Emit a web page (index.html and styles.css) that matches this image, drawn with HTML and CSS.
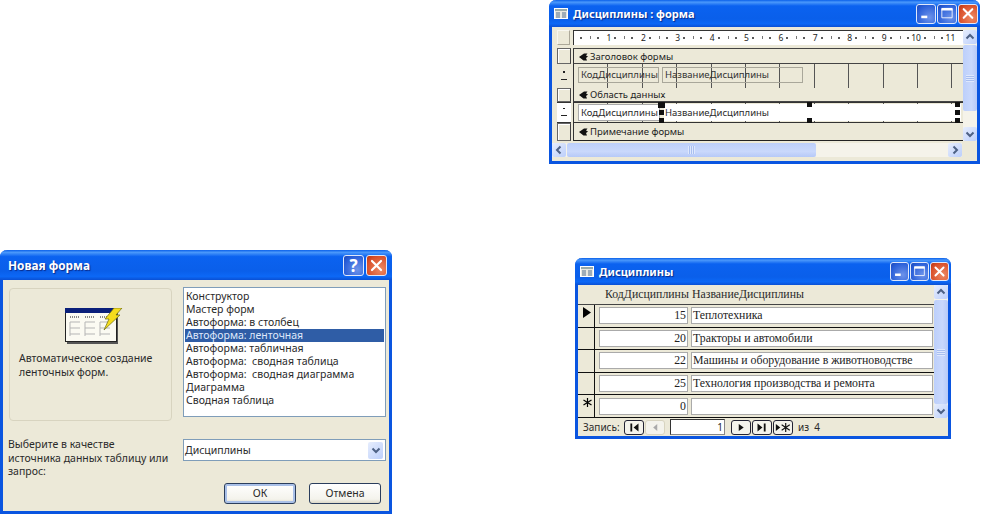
FILE: index.html
```html
<!DOCTYPE html>
<html lang="ru">
<head>
<meta charset="utf-8">
<title>Формы</title>
<link rel="stylesheet" href="styles.css">
</head>
<body>
<svg class="defs" width="0" height="0" aria-hidden="true">
  <symbol id="appicon" viewBox="0 0 14 11">
    <rect x="0.5" y="0.5" width="13" height="10" fill="#e8e8e0" stroke="#fff"/>
    <rect x="1" y="1" width="12" height="2" fill="#9aa"/>
    <path d="M2 5h4M8 5h4M2 7h4M8 7h4M2 9h4M8 9h4" stroke="#55708f" stroke-width="1"/>
  </symbol>
  <symbol id="min" viewBox="0 0 21 21"><rect x="5" y="13" width="7" height="3" fill="#fff"/></symbol>
  <symbol id="max" viewBox="0 0 21 21"><path d="M4.500 5.500h12v10h-12z" fill="none" stroke="#fff"/><rect x="4" y="4" width="13" height="3" fill="#fff"/></symbol>
  <symbol id="close" viewBox="0 0 21 21"><path d="M5.500 5.500l10 10M15.500 5.500l-10 10" stroke="#fff" stroke-width="2.400" stroke-linecap="round"/></symbol>
  <symbol id="up" viewBox="0 0 14 14"><path d="M3.500 8.500L7 5l3.500 3.500" fill="none" stroke="#4d6185" stroke-width="2"/></symbol>
  <symbol id="down" viewBox="0 0 14 14"><path d="M3.500 5.500L7 9l3.500-3.500" fill="none" stroke="#4d6185" stroke-width="2"/></symbol>
  <symbol id="left" viewBox="0 0 14 14"><path d="M8.500 3.500L5 7l3.500 3.500" fill="none" stroke="#4d6185" stroke-width="2"/></symbol>
  <symbol id="right" viewBox="0 0 14 14"><path d="M5.500 3.500L9 7l-3.500 3.500" fill="none" stroke="#4d6185" stroke-width="2"/></symbol>
  <symbol id="hand" viewBox="0 0 9 8"><path d="M0 4L5 0.500h3.500L7 2.500 9 3.500 7 5l1 2.500H4.500z" fill="#111"/></symbol>
</svg>

<section class="window win-design">
  <header class="title">
    <svg class="appicon"><use href="#appicon"/></svg>
    <span class="title-text">Дисциплины : форма</span>
    <span class="tbtn blue"><svg><use href="#min"/></svg></span>
    <span class="tbtn blue"><svg><use href="#max"/></svg></span>
    <span class="tbtn red"><svg><use href="#close"/></svg></span>
  </header>
  <div class="design-body">
    <div class="design-top">
      <div class="design-main">
        <div class="ruler-row">
          <div class="rail-corner"></div>
          <div class="ruler">
            <span class="cm">1</span><span class="cm">2</span><span class="cm">3</span><span class="cm">4</span><span class="cm">5</span><span class="cm">6</span><span class="cm">7</span><span class="cm">8</span><span class="cm">9</span><span class="cm">10</span><span class="cm">11</span>
          </div>
        </div>
        <div class="d-row bar-first">
          <div class="rail"><i class="rail-box"></i></div>
          <div class="d-bar"><svg class="hand"><use href="#hand"/></svg>Заголовок формы</div>
        </div>
        <div class="d-row zone">
          <div class="rail"><i class="rail-mark beige"></i></div>
          <div class="d-grid">
            <span class="lbl lbl-a">КодДисциплины</span>
            <span class="lbl lbl-b">НазваниеДисциплины</span>
          </div>
        </div>
        <div class="d-row bar-mid">
          <div class="rail"><i class="rail-box"></i></div>
          <div class="d-bar"><svg class="hand"><use href="#hand"/></svg>Область данных</div>
        </div>
        <div class="d-row detail">
          <div class="rail"><i class="rail-mark"></i></div>
          <div class="d-grid detail-grid">
            <span class="field field-a">КодДисциплины</span>
            <span class="field field-b">НазваниеДисциплины</span>
            <i class="handle h1"></i><i class="handle h2"></i><i class="handle h3"></i><i class="handle h4"></i><i class="handle h5"></i><i class="handle h6"></i><i class="handle h7"></i><i class="handle h8"></i>
          </div>
        </div>
        <div class="d-row bar-last">
          <div class="rail"><i class="rail-box"></i></div>
          <div class="d-bar"><svg class="hand"><use href="#hand"/></svg>Примечание формы</div>
        </div>
      </div>
      <div class="vscroll">
        <span class="sbtn"><svg><use href="#up"/></svg></span>
        <span class="vthumb"><i class="grip"></i></span>
        <span class="vtrack"></span>
        <span class="sbtn"><svg><use href="#down"/></svg></span>
      </div>
    </div>
    <div class="hscroll">
      <span class="sbtn"><svg><use href="#left"/></svg></span>
      <span class="hthumb"><i class="hgrip"></i></span>
      <span class="htrack"></span>
      <span class="sbtn"><svg><use href="#right"/></svg></span>
      <span class="hcorner"></span>
    </div>
  </div>
</section>

<section class="window win-dialog">
  <header class="title title-dialog">
    <span class="title-text">Новая форма</span>
    <span class="tbtn blue help">?</span>
    <span class="tbtn red"><svg><use href="#close"/></svg></span>
  </header>
  <div class="dialog-body">
    <div class="dialog-top">
      <div class="panel">
        <svg class="wizard" viewBox="0 0 58 38" aria-hidden="true">
          <rect x="2" y="3" width="51" height="33" fill="#555"/>
          <rect x="0.500" y="0.500" width="51" height="33" fill="#fbfaf2" stroke="#222"/>
          <rect x="0" y="0" width="52" height="5" fill="#0a1f7a"/>
          <path d="M5 9h10M20 9h10M35 9h10" stroke="#888" stroke-width="2" stroke-dasharray="1 1"/>
          <path d="M5 14h10M20 14h10M35 14h10M5 20h10M20 20h10M35 20h10M5 26h10M20 26h10M35 26h10M5 14v14M20 14v14M35 14v14" stroke="#b5b5b5"/>
          <path d="M49 0h8l-6 7h4L39 22l5-11h-4z" fill="#f5dc1e" stroke="#6a6a10" stroke-width="0.700"/>
        </svg>
        <p class="panel-text">Автоматическое создание<br>ленточных форм.</p>
      </div>
      <ul class="list">
        <li>Конструктор</li>
        <li>Мастер форм</li>
        <li>Автоформа: в столбец</li>
        <li class="sel">Автоформа: ленточная</li>
        <li>Автоформа: табличная</li>
        <li>Автоформа:&nbsp; сводная таблица</li>
        <li>Автоформа:&nbsp; сводная диаграмма</li>
        <li>Диаграмма</li>
        <li>Сводная таблица</li>
      </ul>
    </div>
    <div class="dialog-source">
      <p class="source-label">Выберите в качестве<br>источника данных таблицу или<br>запрос:</p>
      <div class="combo"><span class="combo-text">Дисциплины</span><span class="sbtn combo-btn"><svg><use href="#down"/></svg></span></div>
    </div>
    <div class="dialog-actions">
      <span class="btn btn-default">ОК</span>
      <span class="btn">Отмена</span>
    </div>
  </div>
</section>

<section class="window win-form">
  <header class="title">
    <svg class="appicon"><use href="#appicon"/></svg>
    <span class="title-text">Дисциплины</span>
    <span class="tbtn blue"><svg><use href="#min"/></svg></span>
    <span class="tbtn blue"><svg><use href="#max"/></svg></span>
    <span class="tbtn red"><svg><use href="#close"/></svg></span>
  </header>
  <div class="form-top">
    <div class="form-main">
      <div class="form-head"><span class="fh-a">КодДисциплины</span><span class="fh-b">НазваниеДисциплины</span></div>
      <div class="rec">
        <div class="sel-col"><svg class="cur" viewBox="0 0 8 11"><path d="M0 0l8 5.500L0 11z" fill="#000"/></svg></div>
        <span class="cell num">15</span><span class="cell txt">Теплотехника</span>
      </div>
      <div class="rec">
        <div class="sel-col"></div>
        <span class="cell num">20</span><span class="cell txt">Тракторы и автомобили</span>
      </div>
      <div class="rec">
        <div class="sel-col"></div>
        <span class="cell num">22</span><span class="cell txt">Машины и оборудование в животноводстве</span>
      </div>
      <div class="rec">
        <div class="sel-col"></div>
        <span class="cell num">25</span><span class="cell txt">Технология производства и ремонта</span>
      </div>
      <div class="rec">
        <div class="sel-col"><svg class="cur star" viewBox="0 0 9 9"><path d="M4.500 0v9M0.500 2l8 5M8.500 2l-8 5" stroke="#000" stroke-width="1.200"/></svg></div>
        <span class="cell num">0</span><span class="cell txt"></span>
      </div>
    </div>
    <div class="vscroll">
      <span class="sbtn"><svg><use href="#up"/></svg></span>
      <span class="vthumb"><i class="grip"></i></span>
      <span class="sbtn"><svg><use href="#down"/></svg></span>
    </div>
  </div>
  <div class="nav">
    <span class="nav-label">Запись:</span>
    <span class="nbtn"><svg viewBox="0 0 20 14"><path d="M6 2.500h2v9H6zM15 2.500v9L9.500 7z" fill="#111"/></svg></span>
    <span class="nbtn off"><svg viewBox="0 0 20 14"><path d="M12.500 3v8L8 7z" fill="#aaa"/></svg></span>
    <span class="nav-input">1</span>
    <span class="nbtn"><svg viewBox="0 0 20 14"><path d="M7.500 3v8L13 7z" fill="#111"/></svg></span>
    <span class="nbtn"><svg viewBox="0 0 20 14"><path d="M5 2.500v9L10.500 7zM12 2.500h2v9h-2z" fill="#111"/></svg></span>
    <span class="nbtn"><svg viewBox="0 0 20 14"><path d="M2 3v8l5-4z" fill="#111"/><path d="M13 2v10M8.500 4l9 6M17.500 4l-9 6" stroke="#111" stroke-width="1.300"/></svg></span>
    <span class="nav-of">из&nbsp; 4</span>
  </div>
</section>
</body>
</html>
```

FILE: styles.css
```css
html, body { margin: 0; padding: 0; height: 100%; background: #fff; overflow: hidden; }
body { position: relative; font-family: "Noto Sans", "Liberation Sans", sans-serif; font-size: 10.500px; color: #2a2a2a; }
.defs { position: absolute; }
p { margin: 0; }
i { font-style: normal; display: block; }

.window { position: absolute; box-sizing: border-box; display: flex; flex-direction: column; background: #ece9d8; border: 3px solid #0a55e0; border-top: 0; border-radius: 7px 7px 0 0; }
.win-design { left: 549px; top: 0; width: 431px; height: 164px; }
.win-dialog { left: 0; top: 250px; width: 392px; height: 264px; }
.win-form { left: 575px; top: 258px; width: 376px; height: 181px; }

.title { flex: none; display: flex; align-items: center; gap: 1px; height: 27px; margin: 0 -3px; padding: 0 2px 0 5px; border-radius: 7px 7px 0 0; background: linear-gradient(#0a60ea 0, #4a98fb 8%, #0b62f0 22%, #0a5fea 70%, #0c68f6 88%, #0a50d4 100%); }
.title-dialog { height: 30px; padding-left: 8px; padding-right: 5px; }
.title-text { flex: 1; color: #fff; font-weight: 700; font-size: 11px; text-shadow: 1px 1px 1px #0a2a88; }
.title-dialog .title-text { font-size: 11.800px; }
.appicon { flex: none; width: 14px; height: 11px; margin-right: 4px; }
.tbtn { flex: none; box-sizing: border-box; display: flex; align-items: center; justify-content: center; width: 20px; height: 20px; border: 1px solid #dfe8fb; border-radius: 3px; color: #fff; }
.tbtn svg { width: 19px; height: 19px; }
.tbtn.blue { background: radial-gradient(circle at 70% 70%, #6d93ea, #2a5fd8 70%, #1c47b8); }
.tbtn.red { background: radial-gradient(circle at 70% 70%, #ee8a64, #d9502a 70%, #b83310); }
.help { font-size: 17px; font-weight: 700; line-height: 1; }
.win-dialog .tbtn { width: 21px; height: 21px; }
.win-dialog .title { gap: 2px; }
.win-form .tbtn { width: 19px; height: 19px; }

/* scrollbars */
.sbtn { flex: none; display: flex; align-items: center; justify-content: center; box-sizing: border-box; width: 14px; height: 14px; background: linear-gradient(135deg, #e6edfd, #bccffb); border-radius: 2px; }
.sbtn svg { width: 14px; height: 14px; }
.vscroll { flex: none; width: 14px; display: flex; flex-direction: column; background: #f5f3ea; }
.vthumb { flex: 1; box-sizing: border-box; display: flex; align-items: center; justify-content: center; margin-top: 1px; background: linear-gradient(90deg, #bccffb, #c9d8fc 60%, #b6c9f8); border-radius: 2px; }
.grip { width: 8px; height: 7px; background: repeating-linear-gradient(#dfe8fd 0 1px, #a9bff0 1px 2px); }
.vtrack { flex: none; height: 16px; }
.hscroll { flex: none; display: flex; height: 14px; margin-top: 2px; background: #f5f3ea; }
.hthumb { flex: none; width: 249px; margin: 0 0 0 1px; display: flex; align-items: center; justify-content: center; background: linear-gradient(#bccffb, #c9d8fc 60%, #b6c9f8); border-radius: 2px; }
.hgrip { width: 7px; height: 8px; background: repeating-linear-gradient(90deg, #dfe8fd 0 1px, #a9bff0 1px 2px); }
.htrack { flex: 1; }
.hcorner { flex: none; width: 15px; background: #ece9d8; }

/* design window */
.design-body { flex: 1; display: flex; flex-direction: column; padding-top: 3px; }
.design-top { display: flex; height: 111px; }
.design-main { flex: 1; min-width: 0; display: flex; flex-direction: column; }
.ruler-row { flex: none; display: flex; height: 15px; padding-left: 5px; gap: 3px; margin-bottom: 3px; }
.rail-corner { flex: none; width: 13px; box-sizing: border-box; border: 1px solid #f8f7f0; border-right-color: #aca899; border-bottom-color: #aca899; }
.ruler { flex: 1; display: flex; padding-left: 3px; background: #fff; border-top: 1px solid #333; border-left: 1px solid #333; overflow: hidden; box-sizing: border-box; }
.cm { flex: none; box-sizing: border-box; width: 34.400px; text-align: right; font-size: 8.500px; line-height: 14px; color: #222; background: radial-gradient(circle, #555 0 0.700px, transparent 0.900px) 2px 5px / 4px 4px no-repeat, linear-gradient(#777, #777) 13px 5px / 1px 3px no-repeat, radial-gradient(circle, #555 0 0.700px, transparent 0.900px) 19px 5px / 4px 4px no-repeat; }
.d-row { flex: none; display: flex; }
.bar-first { height: 16px; }
.zone { height: 24px; }
.bar-mid { height: 14px; }
.detail { height: 21px; }
.bar-last { height: 18px; }
.rail { flex: none; width: 21px; box-sizing: border-box; padding: 0 2px 0 5px; display: flex; }
.rail-box { flex: 1; box-sizing: border-box; border: 1px solid #666; border-right-color: #444; box-shadow: inset 1px 1px 0 #fff; }
.rail-mark { flex: 1; box-sizing: border-box; border-top: 1px solid #333; border-bottom: 1px solid #333; background: linear-gradient(#222, #222) 50% 5px / 2px 1px no-repeat, linear-gradient(#222, #222) 50% 12px / 6px 1px no-repeat, #fff; }
.rail-mark.beige { border: 0; background: linear-gradient(#222, #222) 50% 7px / 2px 2px no-repeat, linear-gradient(#222, #222) 50% 15px / 6px 1px no-repeat, #ece9d8; }
.d-bar { flex: 1; display: flex; align-items: center; gap: 2px; padding-left: 5px; border-left: 1px solid #333; border-top: 1px solid #444; border-bottom: 1px solid #444; font-size: 9.500px; line-height: 1; padding-top: 1px; color: #222; }
.bar-mid .d-bar, .bar-last .d-bar { border-top: 0; }
.bar-last .d-bar { border-bottom: 1px solid #222; }
.hand { flex: none; width: 9px; height: 8px; }
.d-grid { flex: 1; position: relative; border-left: 1px solid #333; background: repeating-linear-gradient(90deg, transparent 0 33.400px, #555 33.400px 34.400px); }
.lbl { position: absolute; top: 3px; height: 16px; box-sizing: border-box; border: 1px solid #a9a79a; font-size: 9.500px; line-height: 14px; padding-left: 2px; white-space: nowrap; color: #333; }
.lbl-a { left: 4px; width: 81px; }
.lbl-b { left: 88px; width: 141px; }
.detail-grid { background: #ece9d8 repeating-linear-gradient(90deg, transparent 0 33.400px, #555 33.400px 34.400px); border-top: 1px solid #333; border-bottom: 1px solid #333; }
.field { position: absolute; top: 1px; height: 17px; box-sizing: border-box; background: #fff; border: 1px solid #aaa; font-size: 9.500px; line-height: 16px; padding-left: 2px; white-space: nowrap; }
.field-a { left: 4px; width: 82px; }
.field-b { left: 90px; width: 297px; padding-left: 1px; border: 0; line-height: 18px; }
.handle { position: absolute; width: 5px; height: 5px; background: #111; }
.h1 { left: 84px; top: -1px; width: 7px; height: 6px; }
.h2 { left: 85px; top: 7px; }
.h3 { left: 85px; top: 15px; }
.h4 { left: 233px; top: -1px; }
.h5 { left: 233px; top: 15px; }
.h6 { left: 381px; top: -1px; }
.h7 { left: 381px; top: 7px; }
.h8 { left: 381px; top: 15px; }

/* dialog */
.dialog-body { flex: 1; display: flex; flex-direction: column; padding: 7px 3px 0 6px; }
.dialog-top { display: flex; gap: 11px; align-items: flex-start; }
.panel { flex: none; box-sizing: border-box; width: 163px; height: 133px; margin-top: 1px; padding: 19px 0 0 9px; border: 1px solid #d8d4c0; border-radius: 4px; }
.wizard { display: block; width: 58px; height: 38px; margin: 0 0 5px 46px; }
.panel-text { line-height: 14px; }
.list { flex: none; box-sizing: border-box; width: 203px; height: 130px; margin: 0; padding: 2px 1px; list-style: none; background: #fff; border: 1px solid #7f9db9; }
.list li { height: 13px; line-height: 13px; padding-left: 1px; white-space: nowrap; }
.list li.sel { background: #2f5da6; color: #dfe8fb; }
.dialog-source { display: flex; justify-content: space-between; margin-top: 18px; height: 42px; margin-left: -1px; }
.source-label { line-height: 13.500px; margin-top: -1px; }
.combo { flex: none; box-sizing: border-box; display: flex; align-items: center; width: 203px; height: 22px; padding: 0 2px 0 1px; background: #fff; border: 1px solid #7f9db9; }
.combo-text { flex: 1; }
.combo-btn { width: 15px; height: 17px; }
.dialog-actions { display: flex; justify-content: flex-end; gap: 13px; padding-right: 5px; margin-top: 2px; }
.btn { box-sizing: border-box; width: 72px; height: 21px; line-height: 18px; text-align: center; background: linear-gradient(#fff, #f4f3ec 80%, #dcd8c8); border: 1px solid #2a3d5c; border-radius: 3px; font-size: 10.500px; }
.btn-default { box-shadow: inset 0 0 0 2px #a9c0e8; }

/* form window */
.form-top { display: flex; height: 133px; }
.form-main { flex: 1; min-width: 0; display: flex; flex-direction: column; }
.form-head { flex: none; height: 20px; display: flex; align-items: center; font-family: "Liberation Serif", serif; font-size: 11.800px; border-bottom: 1px solid #444; box-sizing: border-box; }
.fh-a { margin-left: 27px; width: 87px; white-space: nowrap; }
.fh-b { white-space: nowrap; }
.rec { flex: none; height: 22.600px; box-sizing: border-box; display: flex; align-items: center; border-bottom: 1px solid #111; font-family: "Liberation Serif", serif; font-size: 11.800px; color: #222; }
.sel-col { flex: none; align-self: stretch; width: 17px; box-sizing: border-box; border-right: 1px solid #111; margin-right: 4px; position: relative; }
.cur { position: absolute; left: 5px; top: 2px; width: 8px; height: 11px; }
.star { width: 9px; height: 9px; top: 3px; }
.cell { flex: none; box-sizing: border-box; height: 17px; line-height: 15px; background: #fff; border: 1px solid #aaa; padding: 0 1px; white-space: nowrap; }
.num { width: 89px; text-align: right; margin-right: 3px; }
.txt { width: 242px; }
.nav { flex: none; display: flex; align-items: center; height: 18px; padding-left: 5px; font-size: 10px; }
.nav-label { width: 41px; }
.nbtn { flex: none; box-sizing: border-box; width: 20px; height: 15px; margin-right: 1px; background: #f4f3ec; border: 1px solid #223; border-radius: 3px; display: flex; }
.nbtn svg { width: 18px; height: 13px; }
.nbtn.off { border-color: #d8d4c0; }
.nav-input { flex: none; box-sizing: border-box; width: 55px; height: 16px; margin: 0 6px 0 4px; background: #fff; border: 1px solid #888; border-top-color: #333; border-left-color: #333; text-align: right; padding-right: 1px; line-height: 15px; }
.nav-of { margin-left: 4px; }
```
